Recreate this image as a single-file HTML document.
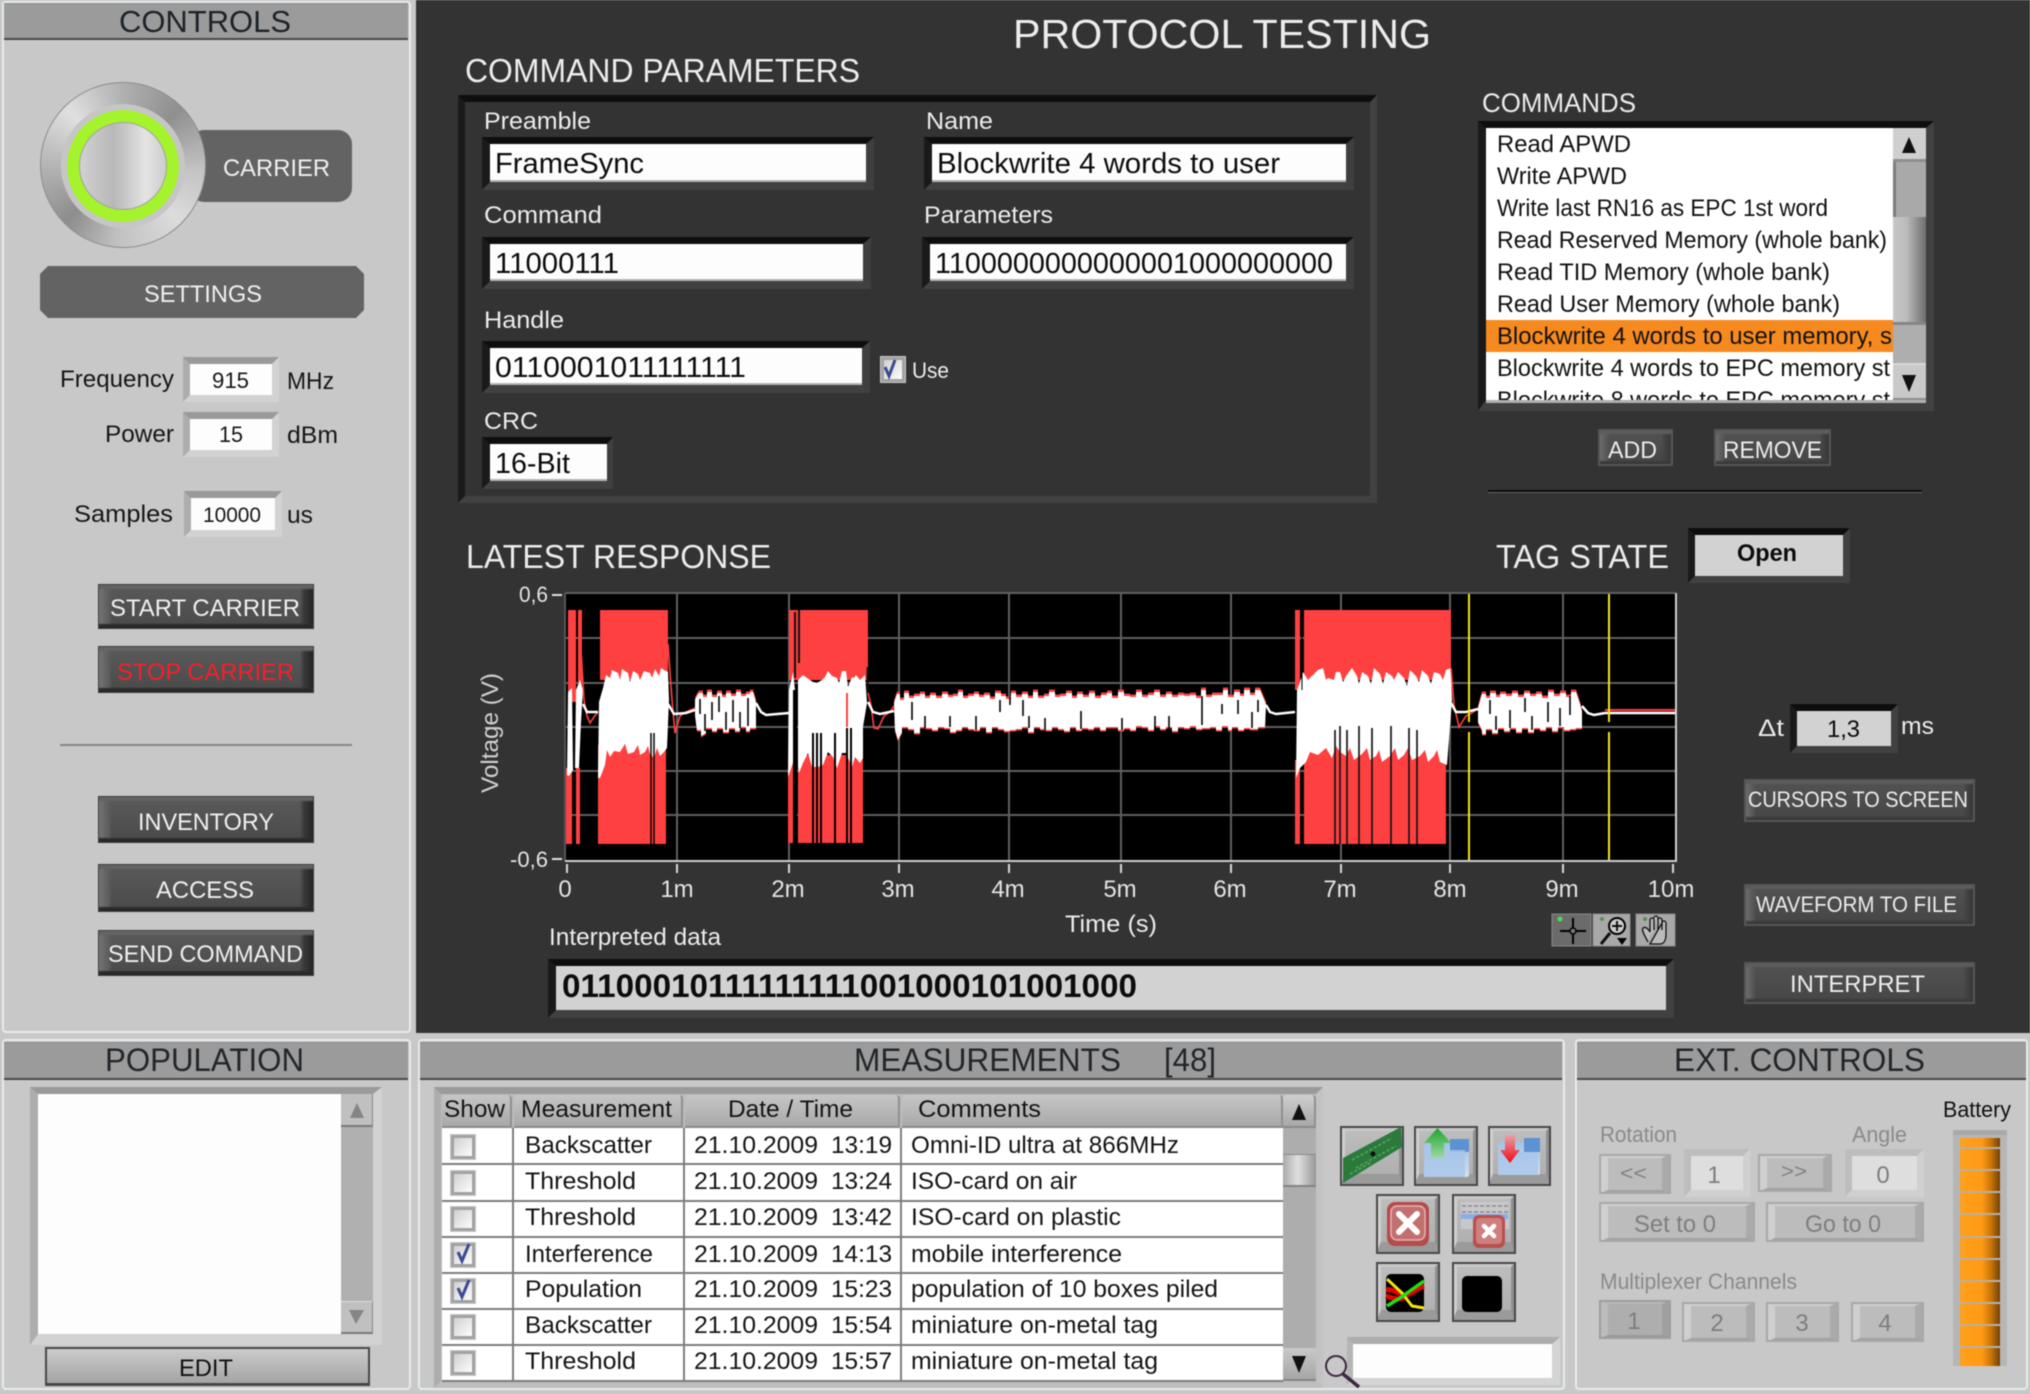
<!DOCTYPE html>
<html lang="en"><head><meta charset="utf-8"><title>Protocol Testing</title>
<style>
html,body{margin:0;padding:0;width:2030px;height:1394px;overflow:hidden;background:#c8c8c8}
#r{position:relative;width:2030px;height:1394px;overflow:hidden;filter:blur(.6px);background:#c8c8c8}
.a{position:absolute;box-sizing:border-box}
.p{background:#c8c8c8;border:2px solid #e6ebee;border-radius:4px}
.h{background:#9b9b9b;border-bottom:2px solid #484848;border-top:1px solid #8c8c8c}
.fd{border-style:solid;border-width:7px 8px 8px 8px;border-color:#0e0e0e #3f3f3f #414141 #1a1a1a;background:#fdfdfd;box-shadow:inset 0 -2px #b5b5b5}
.fg{border-style:solid;border-width:7px;border-color:#0e0e0e #414141 #414141 #1a1a1a;background:#333}
.fl{border-style:solid;border-width:7px;border-color:#9a9a9a #d2d2d2 #d2d2d2 #adadad;background:#fdfdfd}
.bd{border:1px solid #3d3d3d;background:linear-gradient(180deg,#676767 0,#636363 3px,rgba(90,90,90,0) 5px),linear-gradient(0deg,#262626 0,#2b2b2b 3px,rgba(40,40,40,0) 5px),linear-gradient(90deg,#747474 0,#5c5c5c 10px,rgba(90,90,90,0) 13px),linear-gradient(270deg,#242424 0,#3a3a3a 9px,rgba(60,60,60,0) 13px),linear-gradient(#5a5a5a,#4a4a4a)}
.bg{border:2px solid #565656;background:linear-gradient(180deg,#5f5f5f 0,#5c5c5c 2px,rgba(90,90,90,0) 4px),linear-gradient(0deg,#383838 0,#3a3a3a 2px,rgba(50,50,50,0) 4px),linear-gradient(90deg,#6c6c6c 0,#575757 7px,rgba(80,80,80,0) 10px),linear-gradient(270deg,#383838 0,#424242 6px,rgba(60,60,60,0) 10px),linear-gradient(#525252,#464646)}
.bl{border-style:solid;border-width:4px 9px 4px 9px;border-color:#cdcdcd #aaa #a2a2a2 #cfcfcf;background:#bcbcbc;outline:2px solid #a8a8a8;outline-offset:-2px}
.bi{border-style:solid;border-width:5px 5px 12px 5px;border-color:#c8c8c8 #8f8f8f #9a9a9a #cfcfcf;background:linear-gradient(#bdbdbd,#b0b0b0);outline:2px solid #484848;outline-offset:-2px}
.th{background:linear-gradient(#c6c6c6,#a9a9a9);border-radius:4px 4px 0 0;border-right:2px solid #8f8f8f;border-bottom:2px solid #8a8a8a}
.cb{background:linear-gradient(135deg,#d0d0d0,#fdfdfd);border:3px solid #a2a2a2;outline:1px solid #c8c8c8}
text{font-family:"Liberation Sans",Arial,sans-serif}
</style></head><body><div id="r">

<!-- dark main panel -->
<div class="a" style="left:416px;top:0;width:1614px;height:1033px;background:#333"></div>

<!-- controls panel -->
<div class="a p" style="left:2px;top:1px;width:409px;height:1032px"></div>
<div class="a h" style="left:4px;top:3px;width:404px;height:37px"></div>
<div class="a" style="left:190px;top:130px;width:162px;height:72px;background:#636363;border-radius:14px"></div>
<div class="a" style="left:40px;top:82px;width:166px;height:166px;border-radius:50%;border:1px solid #8c8c8c;background:conic-gradient(#b0b0b0 0deg,#8f8f8f 45deg,#c4c4c4 95deg,#dcdcdc 135deg,#c0c0c0 185deg,#8d8d8d 225deg,#b5b5b5 270deg,#e0e0e0 315deg,#b0b0b0 360deg)"></div>
<div class="a" style="left:61px;top:104px;width:124px;height:124px;border-radius:50%;background:#c6c6c6"></div>
<div class="a" style="left:67px;top:110px;width:112px;height:112px;border-radius:50%;background:#a4f32c"></div>
<div class="a" style="left:79px;top:122px;width:88px;height:88px;border-radius:50%;border:1px solid #a2a2a2;background:linear-gradient(90deg,#d2d2d2,#b8b8b8 38%,#c6c6c6 52%,#e4e4e4 76%,#cdcdcd)"></div>

<div class="a fl" style="left:183px;top:357px;width:96px;height:45px"></div>
<div class="a fl" style="left:183px;top:412px;width:96px;height:45px"></div>
<div class="a fl" style="left:184px;top:491px;width:98px;height:46px"></div>

<div class="a bd" style="left:98px;top:584px;width:216px;height:45px"></div>
<div class="a bd" style="left:98px;top:646px;width:216px;height:47px"></div>
<div class="a" style="left:60px;top:744px;width:292px;height:2px;background:#868686"></div>
<div class="a bd" style="left:98px;top:796px;width:216px;height:47px"></div>
<div class="a bd" style="left:98px;top:864px;width:216px;height:48px"></div>
<div class="a bd" style="left:98px;top:930px;width:216px;height:46px"></div>

<!-- command parameters -->
<div class="a fg" style="left:458px;top:95px;width:919px;height:408px"></div>
<div class="a fd" style="left:482px;top:137px;width:392px;height:53px"></div>
<div class="a fd" style="left:924px;top:137px;width:430px;height:53px"></div>
<div class="a fd" style="left:482px;top:237px;width:389px;height:52px"></div>
<div class="a fd" style="left:922px;top:237px;width:432px;height:52px"></div>
<div class="a fd" style="left:482px;top:341px;width:388px;height:52px"></div>
<div class="a fd" style="left:482px;top:437px;width:131px;height:52px;border-right-width:6px"></div>
<div class="a cb" style="left:881px;top:357px;width:24px;height:25px"></div>

<!-- commands list -->
<div class="a fg" style="left:1478px;top:121px;width:456px;height:290px;background:#fff;border-width:7px 8px 11px 8px"></div>
<div class="a" style="left:1486px;top:320px;width:407px;height:32px;background:#f78a1e"></div>
<div class="a" style="left:1486px;top:400px;width:440px;height:3px;background:#b0b0b0"></div>
<div class="a" style="left:1893px;top:128px;width:33px;height:272px;background:linear-gradient(90deg,#c6c6c6,#bcbcbc 40%,#6e6e6e)"></div>
<div class="a" style="left:1893px;top:128px;width:33px;height:34px;background:#cfcfcf;border-bottom:3px solid #8f8f8f"></div>
<div class="a" style="left:1893px;top:162px;width:33px;height:55px;background:#a9a9a9;border-left:3px solid #7d7d7d"></div>
<div class="a" style="left:1893px;top:322px;width:33px;height:43px;background:#aeaeae;border-top:3px solid #858585;border-bottom:2px solid #d8d8d8"></div>
<div class="a" style="left:1893px;top:365px;width:33px;height:35px;background:#c9c9c9;border-bottom:2px solid #8f8f8f"></div>
<div class="a bg" style="left:1598px;top:429px;width:75px;height:37px"></div>
<div class="a bg" style="left:1714px;top:429px;width:117px;height:37px"></div>
<div class="a" style="left:1488px;top:490px;width:434px;height:2px;background:#0c0c0c"></div>
<div class="a" style="left:1488px;top:492px;width:434px;height:1px;background:#666"></div>

<!-- tag state etc -->
<div class="a fg" style="left:1688px;top:528px;width:162px;height:55px;background:#d2d2d2"></div>
<div class="a fg" style="left:1790px;top:704px;width:108px;height:49px;background:#d2d2d2"></div>
<div class="a bg" style="left:1744px;top:779px;width:231px;height:43px"></div>
<div class="a bg" style="left:1744px;top:884px;width:231px;height:42px"></div>
<div class="a bg" style="left:1744px;top:962px;width:231px;height:42px"></div>
<div class="a fg" style="left:548px;top:959px;width:1126px;height:59px;background:#d2d2d2;border-width:7px 8px 8px 8px"></div>

<!-- bottom panels -->
<div class="a p" style="left:2px;top:1039px;width:409px;height:351px"></div>
<div class="a h" style="left:4px;top:1042px;width:404px;height:38px"></div>
<div class="a fl" style="left:30px;top:1087px;width:352px;height:258px;border-width:7px 9px 11px 8px"></div>
<div class="a" style="left:341px;top:1094px;width:32px;height:240px;background:#b0b0b0"></div>
<div class="a" style="left:341px;top:1094px;width:32px;height:33px;background:#c0c0c0;border-bottom:2px solid #7a7a7a;border-right:1px solid #8a8a8a"></div>
<div class="a" style="left:341px;top:1301px;width:32px;height:33px;background:#c0c0c0;border-bottom:2px solid #7a7a7a;border-top:1px solid #ddd;border-right:1px solid #8a8a8a"></div>
<div class="a" style="left:45px;top:1347px;width:325px;height:39px;background:linear-gradient(#cbcbcb,#a4a4a4);border:2px solid #474747;border-bottom-width:3px"></div>

<div class="a p" style="left:418px;top:1039px;width:1147px;height:351px"></div>
<div class="a h" style="left:420px;top:1042px;width:1142px;height:38px"></div>
<div class="a fl" style="left:434px;top:1087px;width:889px;height:301px;border-color:#9a9a9a #c2c2c2 #bdbdbd #adadad;background:#bcbcbc"></div>
<div class="a" style="left:442px;top:1128px;width:841px;height:253px;background:#fff"></div>
<div class="a" style="left:442px;top:1163px;width:841px;height:2px;background:#7c7c7c"></div>
<div class="a" style="left:442px;top:1200px;width:841px;height:2px;background:#7c7c7c"></div>
<div class="a" style="left:442px;top:1236px;width:841px;height:2px;background:#7c7c7c"></div>
<div class="a" style="left:442px;top:1272px;width:841px;height:2px;background:#7c7c7c"></div>
<div class="a" style="left:442px;top:1308px;width:841px;height:2px;background:#7c7c7c"></div>
<div class="a" style="left:442px;top:1344px;width:841px;height:2px;background:#7c7c7c"></div>
<div class="a" style="left:442px;top:1380px;width:841px;height:2px;background:#7c7c7c"></div>
<div class="a" style="left:512px;top:1128px;width:2px;height:253px;background:#7c7c7c"></div>
<div class="a" style="left:683px;top:1128px;width:2px;height:253px;background:#7c7c7c"></div>
<div class="a" style="left:900px;top:1128px;width:2px;height:253px;background:#7c7c7c"></div>
<div class="a th" style="left:442px;top:1095px;width:70px;height:33px"></div>
<div class="a th" style="left:514px;top:1095px;width:169px;height:33px"></div>
<div class="a th" style="left:685px;top:1095px;width:215px;height:33px"></div>
<div class="a th" style="left:902px;top:1095px;width:381px;height:33px"></div>
<div class="a" style="left:1283px;top:1128px;width:33px;height:253px;background:#adadad"></div>
<div class="a th" style="left:1283px;top:1095px;width:33px;height:33px;background:linear-gradient(#cfcfcf,#a8a8a8)"></div>
<div class="a" style="left:1283px;top:1154px;width:33px;height:33px;background:linear-gradient(90deg,#aaa,#e0e0e0 45%,#979797);border-top:1px solid #8a8a8a;border-bottom:2px solid #838383"></div>
<div class="a" style="left:1283px;top:1348px;width:33px;height:33px;background:linear-gradient(#c9c9c9,#a6a6a6);border-bottom:2px solid #858585"></div>

<div class="a cb" style="left:451px;top:1135px;width:24px;height:24px"></div>
<div class="a cb" style="left:451px;top:1171px;width:24px;height:24px"></div>
<div class="a cb" style="left:451px;top:1207px;width:24px;height:24px"></div>
<div class="a cb" style="left:451px;top:1243px;width:24px;height:24px"></div>
<div class="a cb" style="left:451px;top:1279px;width:24px;height:24px"></div>
<div class="a cb" style="left:451px;top:1315px;width:24px;height:24px"></div>
<div class="a cb" style="left:451px;top:1351px;width:24px;height:24px"></div>

<div class="a bi" style="left:1340px;top:1126px;width:64px;height:60px"></div>
<div class="a bi" style="left:1414px;top:1126px;width:64px;height:60px"></div>
<div class="a bi" style="left:1488px;top:1126px;width:63px;height:60px"></div>
<div class="a bi" style="left:1376px;top:1194px;width:64px;height:60px"></div>
<div class="a bi" style="left:1452px;top:1194px;width:64px;height:60px"></div>
<div class="a bi" style="left:1376px;top:1262px;width:64px;height:60px"></div>
<div class="a bi" style="left:1452px;top:1262px;width:64px;height:60px"></div>
<div class="a fl" style="left:1347px;top:1337px;width:213px;height:48px;border-width:7px 8px 7px 6px;border-color:#adadad #d4d4d4 #d4d4d4 #b5b5b5"></div>

<div class="a p" style="left:1575px;top:1039px;width:453px;height:351px"></div>
<div class="a h" style="left:1577px;top:1042px;width:449px;height:38px"></div>
<div class="a bl" style="left:1599px;top:1154px;width:72px;height:40px"></div>
<div class="a fl" style="left:1684px;top:1149px;width:66px;height:48px;border-color:#bdbdbd #d0d0d0 #d0d0d0 #bdbdbd;background:#dedede"></div>
<div class="a bl" style="left:1758px;top:1154px;width:74px;height:38px"></div>
<div class="a fl" style="left:1845px;top:1149px;width:79px;height:48px;border-color:#bdbdbd #d0d0d0 #d0d0d0 #bdbdbd;background:#dedede"></div>
<div class="a bl" style="left:1599px;top:1202px;width:156px;height:40px"></div>
<div class="a bl" style="left:1766px;top:1202px;width:158px;height:40px"></div>
<div class="a bl" style="left:1599px;top:1300px;width:72px;height:39px;background:#aeaeae;border-color:#b8b8b8 #a0a0a0 #9a9a9a #bcbcbc;outline-color:#9e9e9e"></div>
<div class="a bl" style="left:1682px;top:1302px;width:73px;height:40px"></div>
<div class="a bl" style="left:1766px;top:1302px;width:73px;height:40px"></div>
<div class="a bl" style="left:1851px;top:1302px;width:73px;height:40px"></div>
<div class="a" style="left:1953px;top:1130px;width:54px;height:236px;background:#b6b6b6;border-top:5px solid #a8a8a8"></div>
<div class="a" style="left:1960px;top:1138px;width:40px;height:228px;background:linear-gradient(90deg,#ffa01c,#ff9a14 55%,#c97408 78%,#6d4206)"></div>
<div class="a" style="left:1960px;top:1147px;width:40px;height:2px;background:#b8b0a4"></div>
<div class="a" style="left:1960px;top:1169px;width:40px;height:2px;background:#b8b0a4"></div>
<div class="a" style="left:1960px;top:1191px;width:40px;height:2px;background:#b8b0a4"></div>
<div class="a" style="left:1960px;top:1213px;width:40px;height:2px;background:#b8b0a4"></div>
<div class="a" style="left:1960px;top:1236px;width:40px;height:2px;background:#b8b0a4"></div>
<div class="a" style="left:1960px;top:1258px;width:40px;height:2px;background:#b8b0a4"></div>
<div class="a" style="left:1960px;top:1280px;width:40px;height:2px;background:#b8b0a4"></div>
<div class="a" style="left:1960px;top:1302px;width:40px;height:2px;background:#b8b0a4"></div>
<div class="a" style="left:1960px;top:1324px;width:40px;height:2px;background:#b8b0a4"></div>
<div class="a" style="left:1960px;top:1346px;width:40px;height:2px;background:#b8b0a4"></div>

<svg class="a" style="left:0;top:0" width="2030" height="1394" viewBox="0 0 2030 1394" xmlns="http://www.w3.org/2000/svg">
<defs>
<clipPath id="cl"><rect x="1486" y="128" width="407" height="272"/></clipPath>
<clipPath id="pl"><rect x="565" y="594" width="1110" height="267"/></clipPath>
<linearGradient id="fb" x1="0" y1="0" x2="0" y2="1"><stop offset="0" stop-color="#9dbfe6"/><stop offset="1" stop-color="#d5e0ec"/></linearGradient>
<linearGradient id="ga" x1="0" y1="0" x2="0" y2="1"><stop offset="0" stop-color="#1fa52c"/><stop offset="1" stop-color="#9fd8a5"/></linearGradient>
<linearGradient id="ra" x1="0" y1="0" x2="0" y2="1"><stop offset="0" stop-color="#e8a0a8"/><stop offset="1" stop-color="#f00a14"/></linearGradient>
<path id="b1" d="M695,700L697,696L699,693L703,693L703,697L707,697L707,692L712,692L712,697L717,697L717,693L722,693L722,697L726,697L726,693L731,693L731,696L736,696L736,692L741,692L741,696L746,696L746,694L750,694L750,692L753,692L756,702L756,728L750,728L750,731L746,731L746,727L740,727L740,731L735,731L735,728L729,728L729,732L723,732L723,728L717,728L717,731L712,731L712,728L706,728L706,733L701,736L701,730L697,730L695,715Z"/>
<path id="b2" d="M894,703L897,694L900,694L900,700L904,700L904,693L909,693L909,698L914,698L914,696L920,696L920,694L925,694L925,698L930,698L930,695L936,695L936,698L942,698L942,694L948,694L948,697L953,697L953,696L958,696L958,692L963,692L963,698L968,698L968,696L974,696L974,694L979,694L979,697L984,697L984,695L990,695L990,699L995,699L995,693L1001,693L1001,696L1006,696L1006,699L1011,699L1011,693L1016,693L1016,697L1022,697L1022,694L1028,694L1028,698L1033,698L1033,692L1038,692L1038,698L1044,698L1044,696L1049,696L1049,692L1055,692L1055,697L1060,697L1060,696L1066,696L1066,693L1072,693L1072,698L1077,698L1077,694L1083,694L1083,697L1089,697L1089,693L1095,693L1095,698L1101,698L1101,695L1107,695L1107,693L1112,693L1112,698L1118,698L1118,692L1124,692L1124,696L1130,696L1130,697L1136,697L1136,692L1142,692L1142,697L1148,697L1148,695L1154,695L1154,692L1160,692L1160,697L1166,697L1166,694L1172,694L1172,697L1178,697L1178,695L1184,695L1184,696L1190,696L1190,695L1196,695L1196,698L1201,698L1201,690L1206,690L1206,697L1212,697L1212,695L1218,695L1223,695L1223,690L1228,690L1228,697L1234,697L1234,692L1240,692L1240,696L1244,696L1244,690L1250,690L1250,695L1255,695L1255,690L1260,690L1266,704L1265,727L1258,727L1258,729L1250,729L1250,728L1244,728L1244,730L1238,730L1238,727L1232,727L1232,730L1228,730L1228,726L1222,726L1222,730L1216,730L1216,727L1210,727L1210,728L1202,728L1202,729L1196,729L1196,726L1190,726L1190,728L1184,728L1184,727L1178,727L1178,731L1172,731L1172,727L1166,727L1166,729L1160,729L1160,726L1154,726L1154,730L1148,730L1148,727L1142,727L1142,726L1136,726L1136,730L1130,730L1130,728L1124,728L1124,730L1118,730L1118,727L1112,727L1106,727L1106,730L1100,730L1100,727L1094,727L1094,729L1088,729L1088,728L1082,728L1082,730L1076,730L1076,727L1070,727L1070,731L1064,731L1064,729L1058,729L1058,727L1052,727L1052,730L1046,730L1046,729L1040,729L1040,727L1034,727L1034,732L1028,732L1028,727L1022,727L1022,729L1016,729L1016,730L1010,730L1010,731L1004,731L1004,729L998,729L998,727L992,727L992,732L986,732L986,727L980,727L980,730L974,730L974,729L968,729L968,727L962,727L962,730L956,730L956,732L950,732L950,728L944,728L944,727L938,727L938,730L932,730L932,728L926,728L926,727L920,727L920,733L914,733L914,729L908,729L908,727L902,727L902,732L898,740L895,730Z"/>
<path id="b3" d="M1478,708L1482,694L1486,694L1486,698L1490,698L1490,693L1496,693L1496,697L1500,697L1500,694L1506,694L1506,696L1512,696L1512,693L1518,693L1518,697L1524,697L1524,693L1530,693L1530,696L1536,696L1536,694L1542,694L1542,698L1548,698L1548,692L1554,692L1554,696L1560,696L1560,693L1566,693L1566,697L1571,697L1571,692L1576,692L1580,704L1582,712L1582,728L1576,728L1576,729L1570,729L1570,730L1564,730L1564,727L1558,727L1558,731L1552,731L1552,727L1546,727L1546,730L1540,730L1540,728L1534,728L1534,732L1528,732L1528,728L1522,728L1522,732L1516,732L1516,728L1510,728L1510,731L1504,731L1504,728L1498,728L1498,733L1492,733L1492,729L1486,729L1486,734L1482,734L1482,730L1478,722Z"/>
</defs>

<polygon points="48,266 356,266 364,274 364,310 356,318 48,318 40,310 40,274" fill="#636363"/>

<!-- CONTROLS TEXT -->
<g font-size="24" fill="#161616">
<text x="119" y="32" font-size="31" textLength="172" lengthAdjust="spacingAndGlyphs" fill="#1c2228">CONTROLS</text>
<text x="60" y="387" textLength="114" lengthAdjust="spacingAndGlyphs">Frequency</text>
<text x="212" y="388" font-size="22" textLength="37" lengthAdjust="spacingAndGlyphs">915</text>
<text x="287" y="389" textLength="47" lengthAdjust="spacingAndGlyphs">MHz</text>
<text x="105" y="442" textLength="69" lengthAdjust="spacingAndGlyphs">Power</text>
<text x="219" y="442" font-size="22" textLength="24" lengthAdjust="spacingAndGlyphs">15</text>
<text x="287" y="443" textLength="51" lengthAdjust="spacingAndGlyphs">dBm</text>
<text x="74" y="522" textLength="99" lengthAdjust="spacingAndGlyphs">Samples</text>
<text x="203" y="522" font-size="21" textLength="58" lengthAdjust="spacingAndGlyphs">10000</text>
<text x="287" y="523" textLength="26" lengthAdjust="spacingAndGlyphs">us</text>
</g>
<g font-size="24" fill="#f0f0f0">
<text x="223" y="176" textLength="107" lengthAdjust="spacingAndGlyphs">CARRIER</text>
<text x="144" y="302" textLength="118" lengthAdjust="spacingAndGlyphs">SETTINGS</text>
<text x="110" y="616" textLength="190" lengthAdjust="spacingAndGlyphs">START CARRIER</text>
<text x="117" y="680" textLength="177" lengthAdjust="spacingAndGlyphs" fill="#f4202a">STOP CARRIER</text>
<text x="138" y="830" textLength="136" lengthAdjust="spacingAndGlyphs">INVENTORY</text>
<text x="156" y="898" textLength="98" lengthAdjust="spacingAndGlyphs">ACCESS</text>
<text x="108" y="962" textLength="195" lengthAdjust="spacingAndGlyphs">SEND COMMAND</text>
</g>

<!-- DARK PANEL TEXT -->
<g font-size="24" fill="#ececec">
<text x="1013" y="48" font-size="41" textLength="418" lengthAdjust="spacingAndGlyphs">PROTOCOL TESTING</text>
<text x="465" y="82" font-size="33" textLength="395" lengthAdjust="spacingAndGlyphs">COMMAND PARAMETERS</text>
<text x="484" y="129" textLength="107" lengthAdjust="spacingAndGlyphs">Preamble</text>
<text x="926" y="129" textLength="67" lengthAdjust="spacingAndGlyphs">Name</text>
<text x="484" y="223" textLength="118" lengthAdjust="spacingAndGlyphs">Command</text>
<text x="924" y="223" textLength="129" lengthAdjust="spacingAndGlyphs">Parameters</text>
<text x="484" y="328" textLength="80" lengthAdjust="spacingAndGlyphs">Handle</text>
<text x="912" y="378" font-size="22" textLength="37" lengthAdjust="spacingAndGlyphs">Use</text>
<text x="484" y="429" textLength="54" lengthAdjust="spacingAndGlyphs">CRC</text>
<text x="1482" y="112" font-size="27" textLength="154" lengthAdjust="spacingAndGlyphs">COMMANDS</text>
<text x="1608" y="458" textLength="49" lengthAdjust="spacingAndGlyphs">ADD</text>
<text x="1723" y="458" textLength="99" lengthAdjust="spacingAndGlyphs">REMOVE</text>
<text x="466" y="568" font-size="33" textLength="305" lengthAdjust="spacingAndGlyphs">LATEST RESPONSE</text>
<text x="1496" y="568" font-size="33" textLength="173" lengthAdjust="spacingAndGlyphs">TAG STATE</text>
<text x="549" y="945" textLength="172" lengthAdjust="spacingAndGlyphs">Interpreted data</text>
<text x="1065" y="932" textLength="92" lengthAdjust="spacingAndGlyphs">Time (s)</text>
<text x="1758" y="736" textLength="26" lengthAdjust="spacingAndGlyphs">Δt</text>
<text x="1901" y="734" textLength="33" lengthAdjust="spacingAndGlyphs">ms</text>
<text x="1748" y="807" font-size="22" textLength="220" lengthAdjust="spacingAndGlyphs">CURSORS TO SCREEN</text>
<text x="1756" y="912" font-size="22" textLength="201" lengthAdjust="spacingAndGlyphs">WAVEFORM TO FILE</text>
<text x="1790" y="992" textLength="135" lengthAdjust="spacingAndGlyphs">INTERPRET</text>
<text transform="translate(498,793) rotate(-90)" textLength="120" lengthAdjust="spacingAndGlyphs" fill="#d0d0d0">Voltage (V)</text>
</g>

<!-- INPUT TEXT -->
<g font-size="29" fill="#0c0c0c">
<text x="495" y="173" textLength="149" lengthAdjust="spacingAndGlyphs">FrameSync</text>
<text x="937" y="173" textLength="343" lengthAdjust="spacingAndGlyphs">Blockwrite 4 words to user</text>
<text x="495" y="273" textLength="124" lengthAdjust="spacingAndGlyphs">11000111</text>
<text x="935" y="273" textLength="398" lengthAdjust="spacingAndGlyphs">1100000000000001000000000</text>
<text x="495" y="377" textLength="251" lengthAdjust="spacingAndGlyphs">0110001011111111</text>
<text x="495" y="473" textLength="75" lengthAdjust="spacingAndGlyphs">16-Bit</text>
<text x="1737" y="561" font-size="24" font-weight="bold" textLength="60" lengthAdjust="spacingAndGlyphs">Open</text>
<text x="1827" y="737" font-size="24" textLength="33" lengthAdjust="spacingAndGlyphs">1,3</text>
<text x="562" y="997" font-size="32" font-weight="bold" textLength="575" lengthAdjust="spacingAndGlyphs">01100010111111111001000101001000</text>
</g>
<path d="M885,367 l4,9 l6,-16" stroke="#3a4a92" stroke-width="3" fill="none"/>

<!-- COMMAND LIST -->
<g font-size="24" fill="#111" clip-path="url(#cl)">
<text x="1497" y="152" textLength="134" lengthAdjust="spacingAndGlyphs">Read APWD</text>
<text x="1497" y="184" textLength="130" lengthAdjust="spacingAndGlyphs">Write APWD</text>
<text x="1497" y="216" textLength="331" lengthAdjust="spacingAndGlyphs">Write last RN16 as EPC 1st word</text>
<text x="1497" y="248" textLength="390" lengthAdjust="spacingAndGlyphs">Read Reserved Memory (whole bank)</text>
<text x="1497" y="280" textLength="333" lengthAdjust="spacingAndGlyphs">Read TID Memory (whole bank)</text>
<text x="1497" y="312" textLength="343" lengthAdjust="spacingAndGlyphs">Read User Memory (whole bank)</text>
<text x="1497" y="344" textLength="395" lengthAdjust="spacingAndGlyphs">Blockwrite 4 words to user memory, s</text>
<text x="1497" y="376" textLength="393" lengthAdjust="spacingAndGlyphs">Blockwrite 4 words to EPC memory st</text>
<text x="1497" y="408" textLength="393" lengthAdjust="spacingAndGlyphs">Blockwrite 8 words to EPC memory st</text>
</g>
<polygon points="1909,137 1902,153 1916,153" fill="#111"/>
<polygon points="1909,392 1902,375 1916,375" fill="#111"/>

<!-- PLOT -->
<rect x="565" y="593" width="1110" height="268" fill="#000"/>
<g stroke="#5f5f5f" stroke-width="2" fill="none">
<path d="M677,594V860M789,594V860M899,594V860M1009,594V860M1121,594V860M1231,594V860M1341,594V860M1450,594V860M1563,594V860"/>
<path d="M565,638H1675M565,683H1675M565,727H1675M565,771H1675M565,815H1675"/>
</g>
<g clip-path="url(#pl)">
<g fill="#ff4040">
<rect x="568" y="610" width="8" height="92"/><rect x="578" y="610" width="4" height="90"/>
<rect x="566" y="768" width="6" height="76"/><rect x="576" y="768" width="4" height="76"/>
<rect x="600" y="610" width="68" height="70"/><rect x="598" y="745" width="68" height="99"/>
<rect x="789" y="610" width="79" height="70"/>
<rect x="788" y="755" width="6" height="88"/><rect x="798" y="755" width="65" height="88"/>
<rect x="1295" y="610" width="5" height="80"/><rect x="1304" y="610" width="147" height="70"/>
<rect x="1295" y="760" width="5" height="84"/><rect x="1304" y="745" width="142" height="99"/>
</g>
<path d="M795,612V678M799,610V663M867.500,667V693" stroke="#111" stroke-width="2" fill="none"/>
<g fill="#fff">
<path d="M567,775L568,692L572,688L573,770L569,776Z"/>
<path d="M575,768L576,690L580,680L583,690L581,722L579,768Z"/>
<path d="M598,778L599,702L603,688L606,675L610,678L612,670L618,673L620,680L622,669L628,673L630,682L633,671L638,674L640,680L644,671L650,673L652,678L655,669L659,676L661,668L664,670L668,672L669,700L667,748L664,752L660,756L657,748L654,758L650,754L648,746L645,752L640,755L638,745L634,752L628,754L625,744L620,752L614,751L610,757L607,750L605,765L600,778Z"/>
<path d="M788,777L789,690L793,672L795,690L794,760Z"/>
<path d="M798,680L803,675L807,678L810,680L813,682L817,683L822,680L825,677L828,671L832,676L837,678L839,683L842,671L846,671L848,687L852,677L854,678L856,675L860,680L865,675L867,703L863,727L863,758L860,763L855,757L852,767L846,753L842,753L837,768L833,757L828,752L823,765L818,767L812,767L808,753L803,763L799,773L798,767Z"/>
<path d="M1296,778L1297,690L1300,682L1303,672L1308,680L1312,676L1318,670L1323,668L1326,680L1328,678L1334,680L1336,672L1340,672L1343,682L1346,676L1352,668L1357,676L1359,684L1362,672L1368,676L1371,684L1374,668L1380,674L1383,684L1386,672L1392,676L1394,680L1398,672L1404,678L1407,686L1410,670L1416,676L1419,682L1422,670L1428,676L1431,684L1434,672L1440,674L1443,680L1446,670L1451,668L1452,700L1447,765L1440,762L1437,750L1434,756L1428,762L1425,750L1420,756L1412,760L1408,748L1404,755L1398,760L1395,748L1390,756L1382,762L1379,750L1376,756L1370,760L1367,748L1362,754L1354,760L1350,748L1346,756L1340,752L1336,746L1332,758L1326,748L1318,755L1310,752L1306,762L1300,768L1296,778Z"/>
</g>
<g fill="#ff4040">
<use href="#b1" transform="translate(0,-2.500)"/><use href="#b2" transform="translate(0,-2.500)"/><use href="#b3" transform="translate(0,-2.500)"/>
<use href="#b1" transform="translate(0,1.500)"/><use href="#b2" transform="translate(0,1.500)"/><use href="#b3" transform="translate(0,1.500)"/>
</g>
<g fill="#fff"><use href="#b1"/><use href="#b2"/><use href="#b3"/></g>
<g fill="none" stroke="#ff4040" stroke-width="1.6">
<path d="M581,650L584,700L587,716L590,723L594,717L598,712"/>
<path d="M668,644L672,700L675,733L680,716L686,712L695,708"/>
<path d="M868,693L871,705L874,728L878,729L884,716L890,712L894,706"/>
<path d="M1451,668L1454,705L1459,727L1466,716L1472,713L1478,708"/>
<path d="M1605,710H1675" stroke-width="2"/>
<path d="M847,693V727" stroke-width="2"/>
</g>
<g fill="none" stroke="#fff" stroke-width="2.5">
<path d="M583,704L587,712L598,712"/>
<path d="M668,704L674,714L686,713L695,710"/>
<path d="M756,703L761,712L766,715L789,713"/>
<path d="M868,702L873,712L880,714L894,711"/>
<path d="M1266,705L1270,712L1276,714L1295,712"/>
<path d="M1451,703L1456,712L1466,712L1478,709"/>
<path d="M1582,706L1588,713L1594,715L1605,713"/>
<path d="M1605,713H1675"/>
</g>
<g fill="none" stroke="#000" stroke-width="1.6">
<path d="M700,699V714M705,714V731M712,702V720M719,696V712M726,712V730M733,700V722M740,712V728M748,698V726"/>
<path d="M1010,697V705M1029,716V728M1023,700V716M1045,718V730M1081,711V729M1122,718V730M1155,716V730M1169,716V729M1202,696V725M1222,704V714M1238,700V714M1252,712V728M1258,700V712"/>
<path d="M912,702V720M925,716V728M950,716V727M976,716V730M1000,700V712"/>
<path d="M1490,700V714M1496,716V730M1510,710V728M1525,698V712M1532,716V730M1548,702V722M1560,708V726M1570,696V715"/>
<path d="M651,733V844M654,733V844" stroke-width="1.500"/>
<path d="M813,733V843M817,733V843M821,733V843M835,733V843M847,728V843M851,728V843" stroke-width="2"/>
<path d="M794,690V843M796,690V843" stroke-width="2"/>
</g>
<path d="M1302,610V690" stroke="#000" stroke-width="1"/>
<path d="M1335,730V844M1340,726V844M1347,730V844M1359,726V844M1372,728V844M1391,726V844M1409,728V844M1417,730V844" stroke="#151515" stroke-width="1.700" fill="none"/>
<path d="M1469,594V722M1469,732V860M1609,594V722M1609,732V860" stroke="#f5e612" stroke-width="2" fill="none"/>
</g>
<path d="M565,593H1675" stroke="#606060" stroke-width="2"/>
<path d="M565,593V861" stroke="#555" stroke-width="2"/>
<path d="M565,861H1676V593" stroke="#cfcfcf" stroke-width="2" fill="none"/>
<path d="M552,595H562M552,859H562" stroke="#e0e0e0" stroke-width="2"/>
<path d="M567,864V873M677,864V873M789,864V873M899,864V873M1009,864V873M1121,864V873M1231,864V873M1341,864V873M1450,864V873M1563,864V873M1673,864V873" stroke="#d8d8d8" stroke-width="2"/>
<g font-size="24" fill="#e4e4e4" text-anchor="middle">
<text x="565" y="897">0</text>
<text x="677" y="897">1m</text>
<text x="788" y="897">2m</text>
<text x="898" y="897">3m</text>
<text x="1008" y="897">4m</text>
<text x="1120" y="897">5m</text>
<text x="1230" y="897">6m</text>
<text x="1340" y="897">7m</text>
<text x="1450" y="897">8m</text>
<text x="1562" y="897">9m</text>
<text x="1671" y="897">10m</text>
</g>
<text x="519" y="602" font-size="22" fill="#e4e4e4" textLength="29" lengthAdjust="spacingAndGlyphs">0,6</text>
<text x="510" y="867" font-size="22" fill="#e4e4e4" textLength="38" lengthAdjust="spacingAndGlyphs">-0,6</text>

<!-- graph palette -->
<rect x="1552" y="914" width="39" height="32" fill="#6b6b6b" stroke="#8a8a8a"/>
<rect x="1593" y="914" width="37" height="32" fill="#a8a8a8" stroke="#8a8a8a"/>
<rect x="1636" y="914" width="39" height="32" fill="#a8a8a8" stroke="#8a8a8a"/>
<circle cx="1560" cy="919" r="2.500" fill="#46e04a"/>
<path d="M1573,918V944M1560,931H1586" stroke="#000" stroke-width="2"/><circle cx="1573" cy="931" r="3" fill="#777" stroke="#000" stroke-width="1.500"/>
<circle cx="1602" cy="919" r="2" fill="#5a8a5a"/>
<circle cx="1617" cy="926" r="8" fill="#ccc" stroke="#000" stroke-width="2"/><path d="M1612,926H1622M1617,921V931" stroke="#111" stroke-width="2"/><path d="M1610,933L1601,944" stroke="#111" stroke-width="3"/><polygon points="1617,938 1627,938 1622,945" fill="#000"/>
<circle cx="1645" cy="919" r="2" fill="#5a8a5a"/>
<path d="M1648,942C1645,936 1641,930 1643,928C1646,926 1649,930 1650,932L1650,920a2,2 0 0 1 4,0V930M1654,918a2,2 0 0 1 4,0V930M1658,920a2,2 0 0 1 4,0V930M1662,923a2,2 0 0 1 4,0V934C1666,940 1664,944 1660,944H1650Z" fill="#bbb" stroke="#111" stroke-width="1.300"/>

<!-- BOTTOM HEADERS -->
<g font-size="32" fill="#22262a">
<text x="105" y="1071" textLength="199" lengthAdjust="spacingAndGlyphs">POPULATION</text>
<text x="854" y="1071" textLength="267" lengthAdjust="spacingAndGlyphs">MEASUREMENTS</text>
<text x="1164" y="1071" textLength="52" lengthAdjust="spacingAndGlyphs">[48]</text>
<text x="1674" y="1071" textLength="251" lengthAdjust="spacingAndGlyphs">EXT. CONTROLS</text>
</g>
<text x="179" y="1376" font-size="24" fill="#111" textLength="54" lengthAdjust="spacingAndGlyphs">EDIT</text>
<polygon points="357,1103 350,1118 364,1118" fill="#858585"/>
<polygon points="356,1324 349,1310 364,1310" fill="#858585"/>

<!-- TABLE TEXT -->
<g font-size="24" fill="#141414">
<text x="444" y="1117" textLength="61" lengthAdjust="spacingAndGlyphs">Show</text>
<text x="521" y="1117" textLength="151" lengthAdjust="spacingAndGlyphs">Measurement</text>
<text x="728" y="1117" textLength="125" lengthAdjust="spacingAndGlyphs">Date / Time</text>
<text x="918" y="1117" textLength="123" lengthAdjust="spacingAndGlyphs">Comments</text>

<text x="525" y="1153" textLength="127" lengthAdjust="spacingAndGlyphs">Backscatter</text>
<text x="694" y="1153" textLength="124" lengthAdjust="spacingAndGlyphs">21.10.2009</text><text x="831" y="1153" textLength="61" lengthAdjust="spacingAndGlyphs">13:19</text>
<text x="911" y="1153" textLength="268" lengthAdjust="spacingAndGlyphs">Omni-ID ultra at 866MHz</text>

<text x="525" y="1189" textLength="111" lengthAdjust="spacingAndGlyphs">Threshold</text>
<text x="694" y="1189" textLength="124" lengthAdjust="spacingAndGlyphs">21.10.2009</text><text x="831" y="1189" textLength="61" lengthAdjust="spacingAndGlyphs">13:24</text>
<text x="911" y="1189" textLength="166" lengthAdjust="spacingAndGlyphs">ISO-card on air</text>

<text x="525" y="1225" textLength="111" lengthAdjust="spacingAndGlyphs">Threshold</text>
<text x="694" y="1225" textLength="124" lengthAdjust="spacingAndGlyphs">21.10.2009</text><text x="831" y="1225" textLength="61" lengthAdjust="spacingAndGlyphs">13:42</text>
<text x="911" y="1225" textLength="210" lengthAdjust="spacingAndGlyphs">ISO-card on plastic</text>

<text x="525" y="1262" textLength="128" lengthAdjust="spacingAndGlyphs">Interference</text>
<text x="694" y="1262" textLength="124" lengthAdjust="spacingAndGlyphs">21.10.2009</text><text x="831" y="1262" textLength="61" lengthAdjust="spacingAndGlyphs">14:13</text>
<text x="911" y="1262" textLength="211" lengthAdjust="spacingAndGlyphs">mobile interference</text>

<text x="525" y="1297" textLength="117" lengthAdjust="spacingAndGlyphs">Population</text>
<text x="694" y="1297" textLength="124" lengthAdjust="spacingAndGlyphs">21.10.2009</text><text x="831" y="1297" textLength="61" lengthAdjust="spacingAndGlyphs">15:23</text>
<text x="911" y="1297" textLength="307" lengthAdjust="spacingAndGlyphs">population of 10 boxes piled</text>

<text x="525" y="1333" textLength="127" lengthAdjust="spacingAndGlyphs">Backscatter</text>
<text x="694" y="1333" textLength="124" lengthAdjust="spacingAndGlyphs">21.10.2009</text><text x="831" y="1333" textLength="61" lengthAdjust="spacingAndGlyphs">15:54</text>
<text x="911" y="1333" textLength="247" lengthAdjust="spacingAndGlyphs">miniature on-metal tag</text>

<text x="525" y="1369" textLength="111" lengthAdjust="spacingAndGlyphs">Threshold</text>
<text x="694" y="1369" textLength="124" lengthAdjust="spacingAndGlyphs">21.10.2009</text><text x="831" y="1369" textLength="61" lengthAdjust="spacingAndGlyphs">15:57</text>
<text x="911" y="1369" textLength="247" lengthAdjust="spacingAndGlyphs">miniature on-metal tag</text>
</g>
<path d="M458,1252l4,9l7,-17M458,1288l4,9l7,-17" stroke="#3a4a92" stroke-width="3" fill="none"/>
<polygon points="1299,1104 1292,1120 1306,1120" fill="#111"/>
<polygon points="1299,1373 1292,1356 1306,1356" fill="#111"/>

<!-- ICONS -->
<polygon points="1401,1127 1343,1158 1343,1183 1402,1147" fill="#2b7a3c"/>
<path d="M1352,1160L1392,1138M1356,1168L1396,1146M1350,1174L1372,1162" stroke="#5aa868" stroke-width="1.500" stroke-dasharray="3 2"/>
<circle cx="1373" cy="1154" r="2.500" fill="#111"/>

<path d="M1424,1143h26l3,-4h14q2,0 2,2v34q0,2 -2,2h-41q-2,0 -2,-2Z" fill="url(#fb)"/>
<path d="M1450,1139h19v13h-19Z" fill="#5d92d2"/>
<rect x="1424" y="1150" width="41" height="27" fill="#a8c6ea" opacity=".8"/>
<path d="M1437.500,1128L1424,1143H1431V1158H1444V1143H1451Z" fill="url(#ga)"/>

<path d="M1498,1142h26l3,-4h11q2,0 2,2v33q0,2 -2,2h-38q-2,0 -2,-2Z" fill="url(#fb)"/>
<path d="M1524,1138h16v14h-16Z" fill="#5d92d2"/>
<rect x="1498" y="1152" width="40" height="23" fill="#a8c6ea" opacity=".8"/>
<path d="M1510,1163L1500,1150H1505V1135H1515V1150H1520Z" fill="url(#ra)"/>

<rect x="1387" y="1202" width="42" height="44" rx="8" fill="#b44c4c"/>
<rect x="1391" y="1206" width="34" height="34" rx="6" fill="#c2706f" stroke="#e4b4b4" stroke-width="1.500"/>
<path d="M1399,1214L1417,1232M1417,1214L1399,1232" stroke="#fff" stroke-width="6" stroke-linecap="round"/>

<rect x="1461" y="1202" width="48" height="27" fill="#c8c8cc"/>
<path d="M1462,1206H1508M1462,1212H1508" stroke="#8a8a8a" stroke-width="1.500" stroke-dasharray="4 2"/>
<rect x="1461" y="1214" width="47" height="5" fill="#86aeea"/>
<rect x="1473" y="1215" width="32" height="33" rx="6" fill="#b8504f"/>
<rect x="1476" y="1218" width="26" height="26" rx="4" fill="#cf7f7d"/>
<path d="M1484,1226L1494,1236M1494,1226L1484,1236" stroke="#fff" stroke-width="4.500" stroke-linecap="round"/>

<rect x="1386" y="1274" width="38" height="38" rx="5" fill="#000"/>
<path d="M1386,1290C1394,1288 1400,1296 1406,1295C1412,1294 1418,1288 1424,1286M1386,1296C1392,1298 1398,1300 1404,1298" stroke="#e60000" stroke-width="5" fill="none"/>
<path d="M1387,1279L1402,1293L1412,1306L1424,1308" stroke="#f0e814" stroke-width="3" fill="none"/>
<path d="M1387,1306L1400,1298L1424,1281" stroke="#1ee014" stroke-width="3.500" fill="none"/>

<rect x="1462" y="1276" width="40" height="36" rx="5" fill="#000"/>

<circle cx="1336" cy="1366" r="10" fill="none" stroke="#3a2a3e" stroke-width="2"/>
<path d="M1343,1374L1359,1387" stroke="#3a2a3e" stroke-width="3.500"/>

<!-- EXT TEXT -->
<g font-size="24" fill="#8a8a8a">
<text x="1600" y="1142" font-size="22" textLength="77" lengthAdjust="spacingAndGlyphs">Rotation</text>
<text x="1852" y="1142" font-size="22" textLength="55" lengthAdjust="spacingAndGlyphs">Angle</text>
<text x="1600" y="1289" font-size="22" textLength="197" lengthAdjust="spacingAndGlyphs">Multiplexer Channels</text>
<text x="1620" y="1180" font-size="20" textLength="27" lengthAdjust="spacingAndGlyphs" fill="#808080">&lt;&lt;</text>
<text x="1781" y="1178" font-size="20" textLength="26" lengthAdjust="spacingAndGlyphs" fill="#808080">&gt;&gt;</text>
<g fill="#7e7e7e" text-anchor="middle">
<text x="1714" y="1183">1</text><text x="1883" y="1183">0</text>
<text x="1634" y="1329">1</text><text x="1717" y="1331">2</text><text x="1802" y="1331">3</text><text x="1885" y="1331">4</text>
</g>
<text x="1634" y="1232" fill="#7e7e7e" textLength="82" lengthAdjust="spacingAndGlyphs">Set to 0</text>
<text x="1805" y="1232" fill="#7e7e7e" textLength="76" lengthAdjust="spacingAndGlyphs">Go to 0</text>
</g>
<text x="1943" y="1117" font-size="22" fill="#111" textLength="68" lengthAdjust="spacingAndGlyphs">Battery</text>
</svg>
</div></body></html>
